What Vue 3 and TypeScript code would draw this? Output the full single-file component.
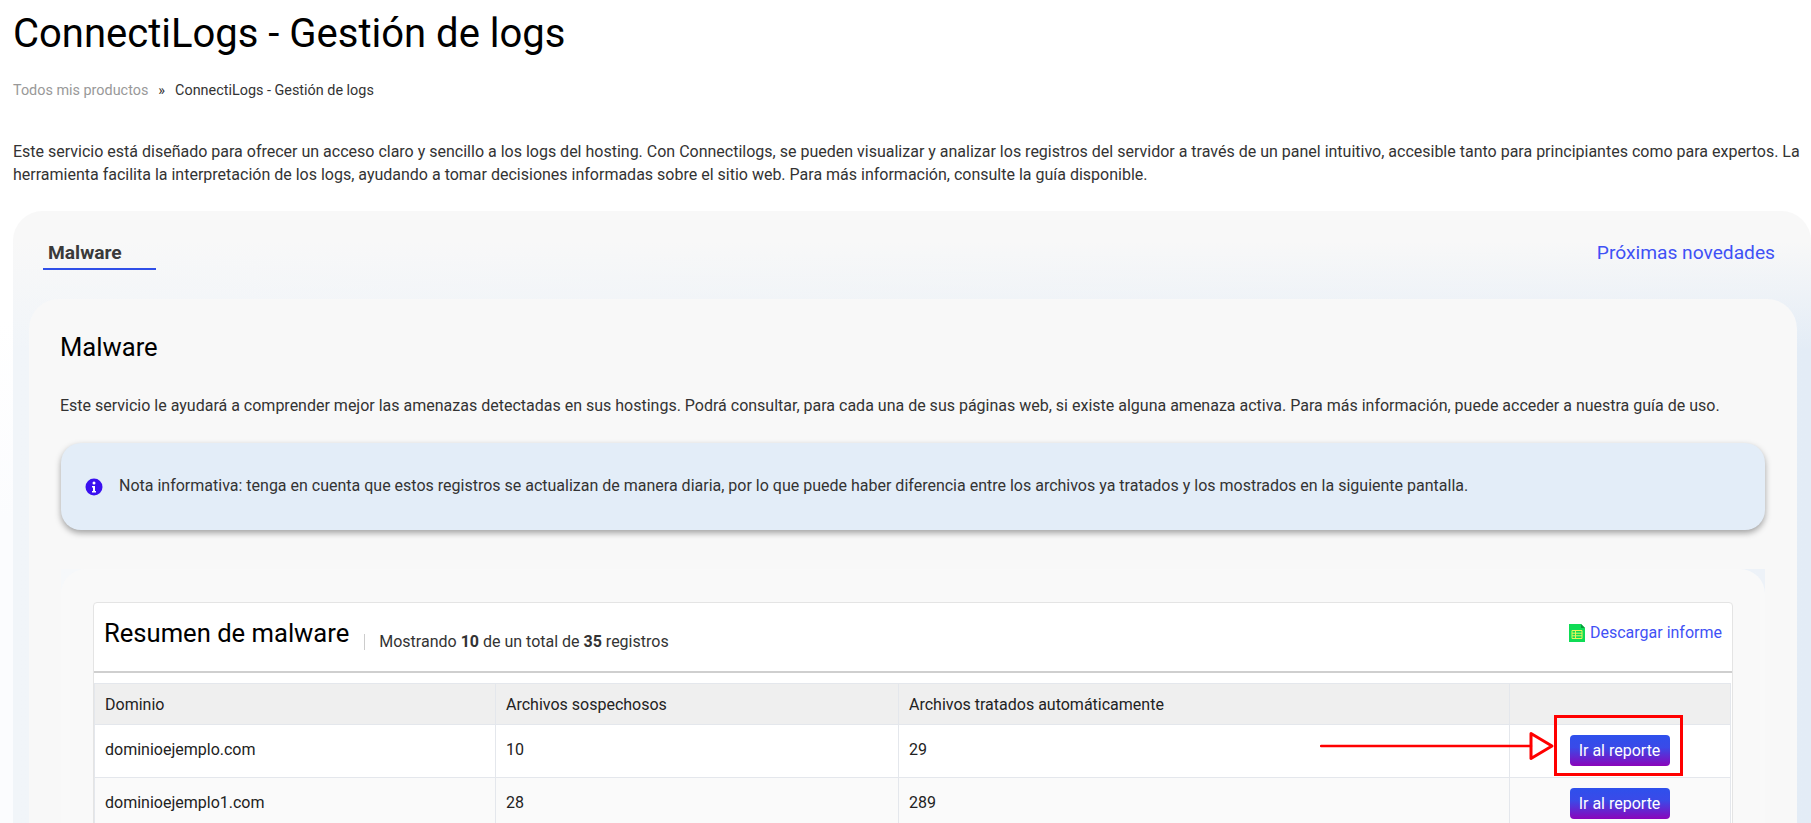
<script setup lang="ts">
interface Row { domain: string; suspicious: number; treated: number }
const rows: Row[] = [
  { domain: 'dominioejemplo.com', suspicious: 10, treated: 29 },
  { domain: 'dominioejemplo1.com', suspicious: 28, treated: 289 },
]
</script>

<template>
  <div class="page">
    <h1 class="title">ConnectiLogs - Gestión de logs</h1>
    <nav class="crumbs">
      <span class="crumb-link">Todos mis productos</span>
      <span class="crumb-sep">»</span>
      <span>ConnectiLogs - Gestión de logs</span>
    </nav>
    <p class="intro">Este servicio está diseñado para ofrecer un acceso claro y sencillo a los logs del hosting. Con Connectilogs, se pueden visualizar y analizar los registros del servidor a través de un panel intuitivo, accesible tanto para principiantes como para expertos. La herramienta facilita la interpretación de los logs, ayudando a tomar decisiones informadas sobre el sitio web. Para más información, consulte la guía disponible.</p>

    <section class="outer">
      <div class="tabs">
        <span class="tab">Malware</span>
        <a class="next">Próximas novedades</a>
      </div>
      <div class="inner">
        <h2 class="inner-title">Malware</h2>
        <p class="inner-text">Este servicio le ayudará a comprender mejor las amenazas detectadas en sus hostings. Podrá consultar, para cada una de sus páginas web, si existe alguna amenaza activa. Para más información, puede acceder a nuestra guía de uso.</p>
        <div class="note">
          <svg class="note-icon" viewBox="0 0 18 18" width="18" height="18">
            <circle cx="9" cy="9" r="8.5" fill="#3a10f0" />
            <circle cx="9" cy="5" r="1.5" fill="#fff" />
            <path d="M7 8h3v5h1v1.4H7V13h1V9.4H7z" fill="#fff" />
          </svg>
          <span class="note-text">Nota informativa: tenga en cuenta que estos registros se actualizan de manera diaria, por lo que puede haber diferencia entre los archivos ya tratados y los mostrados en la siguiente pantalla.</span>
        </div>
        <div class="well">
          <div class="well-body">
            <div class="card">
              <header class="card-head">
                <div class="card-heading">
                  <h3 class="card-title">Resumen de malware</h3>
                  <span class="count">Mostrando <b>10</b> de un total de <b>35</b> registros</span>
                </div>
                <a class="download">
                  <svg viewBox="0 0 16 18" width="16" height="18">
                    <path d="M0 0h12l4 4v14H0z" fill="#0fdc55" />
                    <path d="M12 0l4 4h-4z" fill="#0a9a3c" />
                    <path d="M3 6.5h10v8H3zM3 9.2h10M3 11.8h10M6.5 6.5v8" fill="none" stroke="#e6f55a" stroke-width="1" />
                  </svg>
                  <span>Descargar informe</span>
                </a>
              </header>
              <table class="table">
                <colgroup>
                  <col class="c1" /><col class="c2" /><col class="c3" /><col class="c4" />
                </colgroup>
                <thead>
                  <tr>
                    <th>Dominio</th>
                    <th>Archivos sospechosos</th>
                    <th>Archivos tratados automáticamente</th>
                    <th></th>
                  </tr>
                </thead>
                <tbody>
                  <tr v-for="row in rows" :key="row.domain">
                    <td>{{ row.domain }}</td>
                    <td>{{ row.suspicious }}</td>
                    <td>{{ row.treated }}</td>
                    <td class="action"><button class="report" type="button">Ir al reporte</button></td>
                  </tr>
                </tbody>
              </table>
            </div>
          </div>
        </div>
      </div>
    </section>

    <svg class="callout" width="380" height="70" viewBox="0 0 380 70">
      <path d="M1 31H211" stroke="#f00" stroke-width="2.5" stroke-linecap="round" fill="none" />
      <path d="M211 18.5L232 31L211 43.5z" stroke="#f00" stroke-width="3" stroke-linejoin="round" fill="none" />
      <rect x="235.5" y="1.5" width="126" height="58" stroke="#f00" stroke-width="3" fill="none" />
    </svg>
  </div>
</template>

<style>
html, body { margin: 0; background: #fff; overflow: hidden; }
</style>

<style scoped>
.page {
  position: relative;
  height: 823px;
  overflow: hidden;
  box-sizing: border-box;
  padding: 0 0 0 13px;
  font-family: Roboto, "Liberation Sans", sans-serif;
  color: #333;
  background: linear-gradient(180deg, #fff 320px, #fbfcfe 520px);
}
.title {
  margin: 0;
  padding-top: 12px;
  font-size: 40px;
  line-height: 44px;
  font-weight: 400;
  color: #000;
}
.crumbs {
  display: flex;
  margin-top: 25px;
  font-size: 14.4px;
  line-height: 20px;
  color: #333;
}
.crumb-link { color: #999; }
.crumb-sep { margin: 0 10px; }
.intro {
  margin: 40px 0 0;
  padding-right: 5px;
  font-size: 16px;
  line-height: 22.5px;
  color: #333;
}
.outer {
  margin-top: 25px;
  height: 700px;
  padding: 0 14px 0 16px;
  border-radius: 30px 30px 0 0;
  background:
    linear-gradient(180deg, #f8f8f8 0, #f8f8f8 30px, rgba(248, 248, 248, 0) 140px),
    linear-gradient(90deg, #f1f5f9 0, #e3ecf6 100%);
}
.tabs {
  display: flex;
  justify-content: space-between;
  align-items: flex-start;
  height: 88px;
  padding: 31px 22px 0 14px;
  box-sizing: border-box;
}
.tab {
  display: block;
  width: 113px;
  box-sizing: border-box;
  padding: 0 5px 4px;
  border-bottom: 2px solid #2f4fe8;
  font-size: 19.2px;
  line-height: 22px;
  font-weight: 700;
  color: #3a3a3a;
}
.next {
  font-size: 19.2px;
  line-height: 22px;
  color: #3f51f5;
}
.inner {
  height: 600px;
  padding: 33px 32px 0;
  border-radius: 30px 30px 0 0;
  background: #f8f8f8;
}
.inner-title {
  margin: 0 0 0 -1px;
  font-size: 25.6px;
  line-height: 30px;
  font-weight: 400;
  color: #000;
}
.inner-text {
  margin: 32px 0 0 -1px;
  font-size: 16px;
  line-height: 23px;
}
.note {
  display: flex;
  align-items: center;
  gap: 16px;
  height: 87px;
  margin-top: 26px;
  padding: 0 24px;
  border-radius: 20px;
  background: #e3edf8;
  box-shadow: 0 3px 6px rgba(0, 0, 0, 0.35);
  font-size: 16px;
}
.note-icon { flex: none; }
.note-text { margin-bottom: 2px; }
.well {
  margin-top: 39px;
  background: linear-gradient(90deg, #f6f8fa 0, #edf2f8 100%);
}
.well-body {
  padding: 33px 32px 0;
  border-radius: 25px 25px 0 0;
  background: #f9f9f9;
}
.card {
  background: #fff;
  border: 1px solid #e4e4e4;
  border-radius: 4px 4px 0 0;
}
.card-head {
  display: flex;
  justify-content: space-between;
  align-items: flex-start;
  height: 70px;
  box-sizing: border-box;
  padding: 15px 10px 0 10px;
  border-bottom: 2px solid #cfcfcf;
}
.card-heading { display: flex; align-items: flex-start; }
.card-title {
  margin: 0;
  font-size: 25.6px;
  line-height: 30px;
  font-weight: 400;
  color: #000;
}
.count {
  margin: 16px 0 0 15px;
  padding-left: 14px;
  border-left: 1px solid #ccc;
  font-size: 16px;
  line-height: 16px;
}
.count b { font-weight: 700; }
.download {
  display: flex;
  align-items: center;
  gap: 5px;
  margin-top: 6px;
  font-size: 16px;
  line-height: 18px;
  color: #3f51f5;
}
.table {
  width: 1637px;
  margin: 10px 0 0;
  border-collapse: collapse;
  table-layout: fixed;
  font-size: 16px;
}
.c1 { width: 401px; }
.c2 { width: 403px; }
.c3 { width: 611px; }
.table th, .table td {
  padding: 0 10px;
  border: 1px solid #e4e7ec;
  text-align: left;
  font-weight: 400;
}
.table th {
  height: 40px;
  background: #efefef;
  color: #222;
}
.table td {
  height: 49.5px;
  padding-bottom: 2px;
  color: #222;
  background: #fff;
}
.table tbody tr:nth-child(even) td { background: #fafafa; }
.table td.action { padding: 0 11px 0 10px; text-align: center; }
.report {
  width: 100px;
  height: 31px;
  padding: 0;
  border: 0;
  border-radius: 4px;
  background: linear-gradient(180deg, #2e50ec 0%, #3a4ae8 40%, #8a05bb 100%);
  color: #fff;
  font: 400 16px Roboto, "Liberation Sans", sans-serif;
  vertical-align: middle;
}
.callout {
  position: absolute;
  left: 1320px;
  top: 715px;
}
</style>
